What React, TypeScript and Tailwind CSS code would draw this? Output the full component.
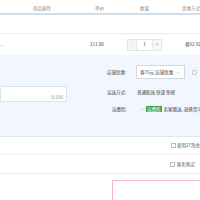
import { Check, ChevronDown } from 'lucide-react'

const font = { fontFamily: '"Noto Sans CJK SC", "Liberation Sans", sans-serif' }

export default function App() {
  return (
    <div className="w-[200px] h-[200px] overflow-hidden bg-white text-[4.5px] leading-none text-[#3c3c3c]" style={font}>
      {/* table header */}
      <div className="flex items-center h-[15px] border-b-2 border-[#cfdcea] text-[#8a8a8a] pt-[3px]">
        <div className="w-[33px] shrink-0" />
        <div className="w-[62px] shrink-0">商品属性</div>
        <div className="w-[45px] shrink-0">单价</div>
        <div className="w-[42px] shrink-0">数量</div>
        <div className="whitespace-nowrap">优惠方式</div>
      </div>

      {/* item row */}
      <div className="mt-[18px] border-t border-[#ececec] h-[22px] flex items-center">
        <div className="w-[90px] shrink-0 text-[#666]">...</div>
        <div className="w-[37px] shrink-0 text-[#3c3c3c]">211.00</div>
        <div className="w-[58px] shrink-0 flex items-center h-[12px]">
          <div className="w-[10px] h-[12px] border border-[#e6e6e6] bg-[#f6f6f6] flex items-center justify-center text-[#bbb]">−</div>
          <div className="w-[15px] h-[12px] border-y border-[#e6e6e6] flex items-center justify-center">1</div>
          <div className="w-[10px] h-[12px] border border-[#e6e6e6] bg-[#f6f6f6] flex items-center justify-center text-[#666]">+</div>
        </div>
        <div className="whitespace-nowrap text-[#3c3c3c]">省62.50</div>
      </div>

      {/* order panel */}
      <div className="h-[82px] bg-[#f2f7ff] border-b border-[#dfe6ef] flex">
        <div className="w-[107px] shrink-0 pt-[31px]">
          <div className="w-[67px] h-[16px] bg-white border border-[#dde3eb] flex items-end justify-end pr-[3px] pb-[2px] text-[#999]">
            0/200
          </div>
        </div>
        <div className="flex-1 flex flex-col pt-[10px] whitespace-nowrap">
          <div className="flex items-center h-[14px]">
            <span className="w-[29px] shrink-0 text-[#3c3c3c]">店铺优惠:</span>
            <div className="w-[49px] h-[14px] bg-white border border-[#d6d6d6] flex items-center justify-between px-[3px]">
              <span>省15元:店铺优惠</span>
              <ChevronDown size={5} strokeWidth={1.5} className="text-[#888]" />
            </div>
            <div className="ml-[7px] w-[5px] h-[5px] border border-[#ccc] rounded-[1px]" />
          </div>
          <div className="flex items-center mt-[6px] h-[14px]">
            <span className="w-[30px] shrink-0">运送方式:</span>
            <span>普通配送 快递 免邮</span>
          </div>
          <div className="flex items-center mt-[4px] h-[12px] pl-[5px]">
            <span className="w-[28px] shrink-0">运费险:</span>
            <Check size={5} strokeWidth={2} className="text-[#888] mr-[1px]" />
            <span className="bg-[#3fa34d] text-white px-[1px] py-[1px]">运费险</span>
            <span className="ml-[2px]">卖家赠送, 退换货可赔</span>
          </div>
        </div>
      </div>

      {/* options */}
      <div className="h-[18px] border-b border-[#f0f0f0] flex items-center pl-[171px] whitespace-nowrap text-[#555]">
        <div className="w-[5px] h-[5px] border border-[#bbb] mr-[1px] shrink-0" />
        <span>使用27淘金币抵扣</span>
      </div>
      <div className="h-[19px] border-b border-[#ececec] flex items-center pl-[170px] whitespace-nowrap text-[#555]">
        <div className="w-[5px] h-[5px] border border-[#bbb] mr-[2px] shrink-0" />
        <span>匿名购买</span>
      </div>

      {/* total box */}
      <div className="mt-[6px] ml-[112px] h-[40px] border border-[#f0b9bf] border-r-0" />
    </div>
  )
}
